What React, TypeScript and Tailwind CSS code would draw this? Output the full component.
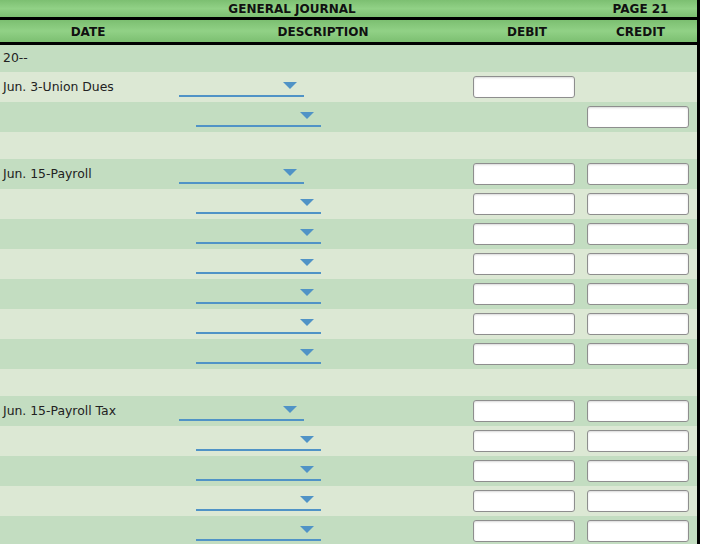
import React from "react";

type Row =
  | { kind: "text"; label: string }
  | { kind: "blank" }
  | { kind: "entry"; label?: string; indent: boolean; debit: boolean; credit: boolean };

const rows: Row[] = [
  { kind: "text", label: "20--" },
  { kind: "entry", label: "Jun. 3-Union Dues", indent: false, debit: true, credit: false },
  { kind: "entry", indent: true, debit: false, credit: true },
  { kind: "blank" },
  { kind: "entry", label: "Jun. 15-Payroll", indent: false, debit: true, credit: true },
  { kind: "entry", indent: true, debit: true, credit: true },
  { kind: "entry", indent: true, debit: true, credit: true },
  { kind: "entry", indent: true, debit: true, credit: true },
  { kind: "entry", indent: true, debit: true, credit: true },
  { kind: "entry", indent: true, debit: true, credit: true },
  { kind: "entry", indent: true, debit: true, credit: true },
  { kind: "blank" },
  { kind: "entry", label: "Jun. 15-Payroll Tax", indent: false, debit: true, credit: true },
  { kind: "entry", indent: true, debit: true, credit: true },
  { kind: "entry", indent: true, debit: true, credit: true },
  { kind: "entry", indent: true, debit: true, credit: true },
  { kind: "entry", indent: true, debit: true, credit: true },
];

const font = { fontFamily: '"DejaVu Sans", Verdana, sans-serif' };

function Dropdown({ indent }: { indent: boolean }) {
  return (
    <div className={`relative h-[25px] w-[125px] border-b-2 border-[#5093c6] ${indent ? "ml-[20px]" : "ml-[3px]"}`}>
      <svg className="absolute right-[7px] top-[10px]" width="14" height="7" viewBox="0 0 14 7">
        <polygon points="0,0 14,0 7,7" fill="#5093c6" />
      </svg>
    </div>
  );
}

function Box() {
  return (
    <div className="h-[22px] w-[102px] rounded-[3px] border border-[#8e8e8e] bg-white shadow-[inset_0_1px_2px_rgba(0,0,0,0.15)]" />
  );
}

export default function App() {
  return (
    <div className="w-[702px] h-[544px] overflow-hidden bg-white" style={font}>
      <div className="w-[700px] border-r-[3px] border-black">
        <div className="flex h-[17px] items-center bg-linear-to-b from-[#7cbf71] via-[#91d186] to-[#7cbf71] text-[12px] font-bold text-[#111]">
          <div className="w-[584px] text-center">GENERAL JOURNAL</div>
          <div className="flex-1 text-center">PAGE 21</div>
        </div>
        <div className="h-[3px] bg-black" />
        <div className="flex h-[22px] items-center bg-linear-to-b from-[#7cbf71] via-[#91d186] to-[#7cbf71] pt-[1px] text-[12px] font-bold text-[#111]">
          <div className="w-[176px] text-center">DATE</div>
          <div className="w-[294px] text-center">DESCRIPTION</div>
          <div className="w-[114px] text-center">DEBIT</div>
          <div className="flex-1 text-center">CREDIT</div>
        </div>
        <div className="h-[3px] bg-black" />
        {rows.map((r, i) => {
          const bg = i % 2 === 0 ? "bg-[#c3ddc1]" : "bg-[#dce8d4]";
          if (r.kind === "text") {
            return (
              <div key={i} className={`flex h-[27px] items-center pl-[3px] text-[12.4px] text-[#222] ${bg}`}>
                {r.label}
              </div>
            );
          }
          if (r.kind === "blank") {
            return <div key={i} className={`h-[27px] ${bg}`} />;
          }
          return (
            <div key={i} className={`flex h-[30px] items-center text-[12.4px] text-[#222] ${bg}`}>
              <div className="w-[176px] pl-[3px] pt-[1px]">{r.label ?? ""}</div>
              <div className="w-[294px] self-start">
                <Dropdown indent={r.indent} />
              </div>
              <div className="w-[114px] pl-[3px]">{r.debit && <Box />}</div>
              <div className="flex-1 pl-[3px]">{r.credit && <Box />}</div>
            </div>
          );
        })}
      </div>
    </div>
  );
}
